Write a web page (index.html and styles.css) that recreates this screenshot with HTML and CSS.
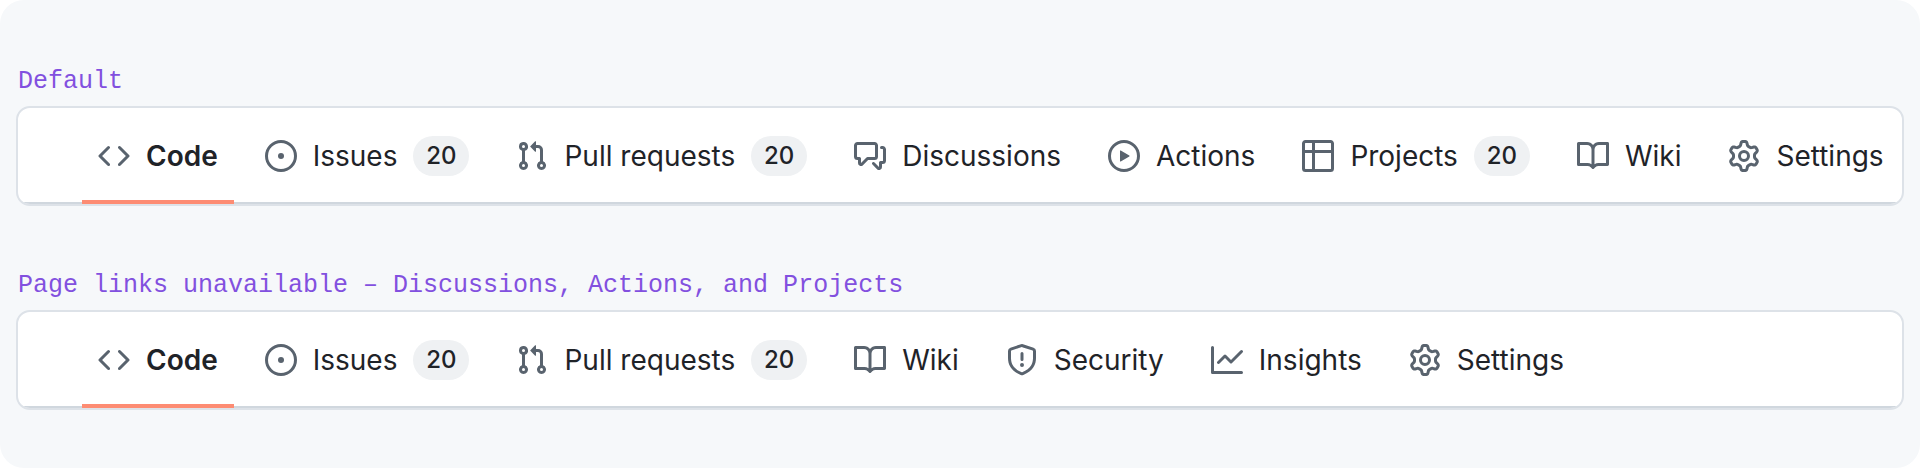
FILE: index.html
```html
<!DOCTYPE html>
<html lang="en">
<head>
<meta charset="utf-8">
<meta name="viewport" content="width=device-width, initial-scale=1">
<title>Repository navigation</title>
<link rel="stylesheet" href="styles.css">
</head>
<body>
<svg class="sprite" aria-hidden="true">
  <symbol id="code" viewBox="0 0 16 16"><path d="m11.28 3.22 4.25 4.25a.75.75 0 0 1 0 1.06l-4.25 4.25a.749.749 0 0 1-1.275-.326.749.749 0 0 1 .215-.734L13.94 8l-3.72-3.72a.749.749 0 0 1 .326-1.275.749.749 0 0 1 .734.215Zm-6.56 0a.751.751 0 0 1 1.042.018.751.751 0 0 1 .018 1.042L2.06 8l3.72 3.72a.749.749 0 0 1-.326 1.275.749.749 0 0 1-.734-.215L.47 8.53a.75.75 0 0 1 0-1.06Z"/></symbol>
  <symbol id="issue" viewBox="0 0 16 16"><path d="M8 9.5a1.5 1.5 0 1 0 0-3 1.5 1.5 0 0 0 0 3Z"/><path d="M8 0a8 8 0 1 1 0 16A8 8 0 0 1 8 0ZM1.5 8a6.5 6.5 0 1 0 13 0 6.5 6.5 0 0 0-13 0Z"/></symbol>
  <symbol id="pull" viewBox="0 0 16 16"><path d="M1.5 3.25a2.25 2.25 0 1 1 3 2.122v5.256a2.251 2.251 0 1 1-1.5 0V5.372A2.25 2.25 0 0 1 1.5 3.25Zm5.677-.177L9.573.677A.25.25 0 0 1 10 .854V2.5h1A2.5 2.5 0 0 1 13.5 5v5.628a2.251 2.251 0 1 1-1.5 0V5a1 1 0 0 0-1-1h-1v1.646a.25.25 0 0 1-.427.177L7.177 3.427a.25.25 0 0 1 0-.354ZM3.75 2.5a.75.75 0 1 0 0 1.5.75.75 0 0 0 0-1.5Zm0 9.5a.75.75 0 1 0 0 1.5.75.75 0 0 0 0-1.5Zm8.25.75a.75.75 0 1 0 1.5 0 .75.75 0 0 0-1.5 0Z"/></symbol>
  <symbol id="discussion" viewBox="0 0 16 16"><path d="M1.75 1h8.5c.966 0 1.75.784 1.75 1.75v5.5A1.75 1.75 0 0 1 10.25 10H7.061l-2.574 2.573A1.458 1.458 0 0 1 2 11.543V10h-.25A1.75 1.75 0 0 1 0 8.25v-5.5C0 1.784.784 1 1.75 1ZM1.5 2.75v5.5c0 .138.112.25.25.25h1a.75.75 0 0 1 .75.75v2.19l2.72-2.72a.749.749 0 0 1 .53-.22h3.5a.25.25 0 0 0 .25-.25v-5.5a.25.25 0 0 0-.25-.25h-8.5a.25.25 0 0 0-.25.25Zm13 2a.25.25 0 0 0-.25-.25h-.5a.75.75 0 0 1 0-1.5h.5c.966 0 1.75.784 1.75 1.75v5.5A1.75 1.75 0 0 1 14.25 12H14v1.543a1.458 1.458 0 0 1-2.487 1.03L9.22 12.28a.749.749 0 0 1 .326-1.275.749.749 0 0 1 .734.215l2.22 2.22v-2.19a.75.75 0 0 1 .75-.75h1a.25.25 0 0 0 .25-.25Z"/></symbol>
  <symbol id="play" viewBox="0 0 16 16"><path d="M8 0a8 8 0 1 1 0 16A8 8 0 0 1 8 0ZM1.5 8a6.5 6.5 0 1 0 13 0 6.5 6.5 0 0 0-13 0Zm4.879-2.773 4.264 2.559a.25.25 0 0 1 0 .428l-4.264 2.559A.25.25 0 0 1 6 10.559V5.442a.25.25 0 0 1 .379-.215Z"/></symbol>
  <symbol id="table" viewBox="0 0 16 16"><path d="M0 1.75C0 .784.784 0 1.75 0h12.5C15.216 0 16 .784 16 1.75v12.5A1.75 1.75 0 0 1 14.25 16H1.75A1.75 1.75 0 0 1 0 14.25ZM6.5 6.5v8h7.75a.25.25 0 0 0 .25-.25V6.5Zm8-1.5V1.75a.25.25 0 0 0-.25-.25H6.5V5Zm-13 1.5v7.75c0 .138.112.25.25.25H5v-8ZM5 5V1.5H1.75a.25.25 0 0 0-.25.25V5Z"/></symbol>
  <symbol id="book" viewBox="0 0 16 16"><path d="M0 1.75A.75.75 0 0 1 .75 1h4.253c1.227 0 2.317.59 3 1.501A3.743 3.743 0 0 1 11.006 1h4.245a.75.75 0 0 1 .75.75v10.5a.75.75 0 0 1-.75.75h-4.507a2.25 2.25 0 0 0-1.591.659l-.622.621a.75.75 0 0 1-1.06 0l-.622-.621A2.25 2.25 0 0 0 5.258 13H.75a.75.75 0 0 1-.75-.75Zm7.251 10.324.004-5.073-.002-2.253A2.25 2.25 0 0 0 5.003 2.5H1.5v9h3.757a3.75 3.75 0 0 1 1.994.574ZM8.755 4.75l-.004 7.322a3.752 3.752 0 0 1 1.992-.572H14.5v-9h-3.495a2.25 2.25 0 0 0-2.25 2.25Z"/></symbol>
  <symbol id="shield" viewBox="0 0 16 16"><path d="M7.467.133a1.748 1.748 0 0 1 1.066 0l5.25 1.68A1.75 1.75 0 0 1 15 3.48V7c0 1.566-.32 3.182-1.303 4.682-.983 1.498-2.585 2.813-5.032 3.855a1.697 1.697 0 0 1-1.33 0c-2.447-1.042-4.049-2.357-5.032-3.855C1.32 10.182 1 8.566 1 7V3.48a1.75 1.75 0 0 1 1.217-1.667Zm.61 1.429a.25.25 0 0 0-.153 0l-5.25 1.68a.25.25 0 0 0-.174.238V7c0 1.358.275 2.666 1.057 3.86.784 1.194 2.121 2.34 4.366 3.297a.196.196 0 0 0 .154 0c2.245-.956 3.582-2.104 4.366-3.298C13.225 9.666 13.5 8.36 13.5 7V3.48a.251.251 0 0 0-.174-.237l-5.25-1.68ZM8.75 4.75v3a.75.75 0 0 1-1.5 0v-3a.75.75 0 0 1 1.5 0ZM9 10.5a1 1 0 1 1-2 0 1 1 0 0 1 2 0Z"/></symbol>
  <symbol id="graph" viewBox="0 0 16 16"><path d="M1.5 1.75V13.5h13.75a.75.75 0 0 1 0 1.5H.75a.75.75 0 0 1-.75-.75V1.75a.75.75 0 0 1 1.5 0Zm14.28 2.53-5.25 5.25a.75.75 0 0 1-1.06 0L7 7.06 4.28 9.78a.751.751 0 0 1-1.042-.018.751.751 0 0 1-.018-1.042l3.25-3.25a.75.75 0 0 1 1.06 0L10 7.94l4.72-4.72a.751.751 0 0 1 1.042.018.751.751 0 0 1 .018 1.042Z"/></symbol>
  <symbol id="gear" viewBox="0 0 16 16"><path d="M8 0a8.2 8.2 0 0 1 .701.031C9.444.095 9.99.645 10.16 1.29l.288 1.107c.018.066.079.158.212.224.231.114.454.243.668.386.123.082.233.09.299.071l1.103-.303c.644-.176 1.392.021 1.82.63.27.385.506.792.704 1.218.315.675.111 1.422-.364 1.891l-.814.806c-.049.048-.098.147-.088.294.016.257.016.515 0 .772-.01.147.038.246.088.294l.814.806c.475.469.679 1.216.364 1.891a7.977 7.977 0 0 1-.704 1.217c-.428.61-1.176.807-1.82.63l-1.102-.302c-.067-.019-.177-.011-.3.071a5.909 5.909 0 0 1-.668.386c-.133.066-.194.158-.211.224l-.29 1.106c-.168.646-.715 1.196-1.458 1.26a8.006 8.006 0 0 1-1.402 0c-.743-.064-1.289-.614-1.458-1.26l-.289-1.106c-.018-.066-.079-.158-.212-.224a5.738 5.738 0 0 1-.668-.386c-.123-.082-.233-.09-.299-.071l-1.103.303c-.644.176-1.392-.021-1.82-.63a8.12 8.12 0 0 1-.704-1.218c-.315-.675-.111-1.422.363-1.891l.815-.806c.05-.048.098-.147.088-.294a6.214 6.214 0 0 1 0-.772c.01-.147-.038-.246-.088-.294l-.815-.806C.635 6.045.431 5.298.746 4.623a7.92 7.92 0 0 1 .704-1.217c.428-.61 1.176-.807 1.82-.63l1.102.302c.067.019.177.011.3-.071.214-.143.437-.272.668-.386.133-.066.194-.158.211-.224l.29-1.106C6.009.645 6.556.095 7.299.03 7.53.01 7.764 0 8 0Zm-.571 1.525c-.036.003-.108.036-.137.146l-.289 1.105c-.147.561-.549.967-.998 1.189-.173.086-.34.183-.5.29-.417.278-.97.423-1.529.27l-1.103-.303c-.109-.03-.175.016-.195.045-.22.312-.412.644-.573.99-.014.031-.021.11.059.19l.815.806c.411.406.562.957.53 1.456a4.709 4.709 0 0 0 0 .582c.032.499-.119 1.05-.53 1.456l-.815.806c-.081.08-.073.159-.059.19.162.346.353.677.573.989.02.03.085.076.195.046l1.102-.303c.56-.153 1.113-.008 1.53.27.161.107.328.204.501.29.447.222.85.629.997 1.189l.289 1.105c.029.109.101.143.137.146a6.6 6.6 0 0 0 1.142 0c.036-.003.108-.036.137-.146l.289-1.105c.147-.561.549-.967.998-1.189.173-.086.34-.183.5-.29.417-.278.97-.423 1.529-.27l1.103.303c.109.029.175-.016.195-.045.22-.313.411-.644.573-.99.014-.031.021-.11-.059-.19l-.815-.806c-.411-.406-.562-.957-.53-1.456a4.709 4.709 0 0 0 0-.582c-.032-.499.119-1.05.53-1.456l.815-.806c.081-.08.073-.159.059-.19a6.464 6.464 0 0 0-.573-.989c-.02-.03-.085-.076-.195-.046l-1.102.303c-.56.153-1.113.008-1.53-.27a4.44 4.44 0 0 0-.501-.29c-.447-.222-.85-.629-.997-1.189l-.289-1.105c-.029-.11-.101-.143-.137-.146a6.6 6.6 0 0 0-1.142 0ZM11 8a3 3 0 1 1-6 0 3 3 0 0 1 6 0ZM9.5 8a1.5 1.5 0 1 0-3.001.001A1.5 1.5 0 0 0 9.5 8Z"/></symbol>
</svg>
<main class="board">
  <section class="example">
    <h2 class="caption">Default</h2>
    <nav class="frame" aria-label="Default">
      <div class="tabs">
        <a class="tab tab-current" href="#" aria-current="page"><svg class="icon"><use href="#code"/></svg>Code</a>
        <a class="tab" href="#"><svg class="icon"><use href="#issue"/></svg>Issues<span class="counter">20</span></a>
        <a class="tab" href="#"><svg class="icon"><use href="#pull"/></svg>Pull requests<span class="counter">20</span></a>
        <a class="tab" href="#"><svg class="icon"><use href="#discussion"/></svg>Discussions</a>
        <a class="tab" href="#"><svg class="icon"><use href="#play"/></svg>Actions</a>
        <a class="tab" href="#"><svg class="icon"><use href="#table"/></svg>Projects<span class="counter">20</span></a>
        <a class="tab" href="#"><svg class="icon"><use href="#book"/></svg>Wiki</a>
        <a class="tab" href="#"><svg class="icon"><use href="#gear"/></svg>Settings</a>
      </div>
    </nav>
  </section>
  <section class="example">
    <h2 class="caption">Page links unavailable – Discussions, Actions, and Projects</h2>
    <nav class="frame" aria-label="Page links unavailable">
      <div class="tabs">
        <a class="tab tab-current" href="#" aria-current="page"><svg class="icon"><use href="#code"/></svg>Code</a>
        <a class="tab" href="#"><svg class="icon"><use href="#issue"/></svg>Issues<span class="counter">20</span></a>
        <a class="tab" href="#"><svg class="icon"><use href="#pull"/></svg>Pull requests<span class="counter">20</span></a>
        <a class="tab" href="#"><svg class="icon"><use href="#book"/></svg>Wiki</a>
        <a class="tab" href="#"><svg class="icon"><use href="#shield"/></svg>Security</a>
        <a class="tab" href="#"><svg class="icon"><use href="#graph"/></svg>Insights</a>
        <a class="tab" href="#"><svg class="icon"><use href="#gear"/></svg>Settings</a>
      </div>
    </nav>
  </section>
</main>
</body>
</html>
```

FILE: styles.css
```css
* {
  box-sizing: border-box;
}

body {
  margin: 0;
  background: #ffffff;
  color: #1f2328;
  font-family: Inter, "Liberation Sans", sans-serif;
}

.sprite {
  display: none;
}

.board {
  display: flex;
  flex-direction: column;
  gap: 62px;
  min-height: 100vh;
  padding: 64px 16px 58px;
  border-radius: 24px;
  background: #f6f8fa;
}

.example {
  display: flex;
  flex-direction: column;
  gap: 6px;
}

.caption {
  margin: 0;
  padding-left: 2px;
  color: #8250df;
  font-family: "Liberation Mono", monospace;
  font-size: 25px;
  font-weight: 400;
  line-height: 36px;
}

.frame {
  overflow: hidden;
  border: 2px solid #dde2e8;
  border-radius: 14px;
  background: #ffffff;
}

.tabs {
  display: flex;
  gap: 15px;
  padding-left: 64px;
  box-shadow: inset 0 -2px #d0d7de;
}

.tab {
  display: flex;
  align-items: center;
  gap: 16px;
  padding: 28px 16px;
  color: inherit;
  font-size: 28px;
  line-height: 40px;
  text-decoration: none;
  white-space: nowrap;
}

.tab-current {
  box-shadow: inset 0 -4px #fd8c73;
  font-weight: 600;
}

.icon {
  flex: none;
  width: 32px;
  height: 32px;
  fill: #59636e;
}

.counter {
  min-width: 56px;
  border-radius: 20px;
  background: #eff1f3;
  font-size: 24px;
  font-weight: 500;
  text-align: center;
}
```
